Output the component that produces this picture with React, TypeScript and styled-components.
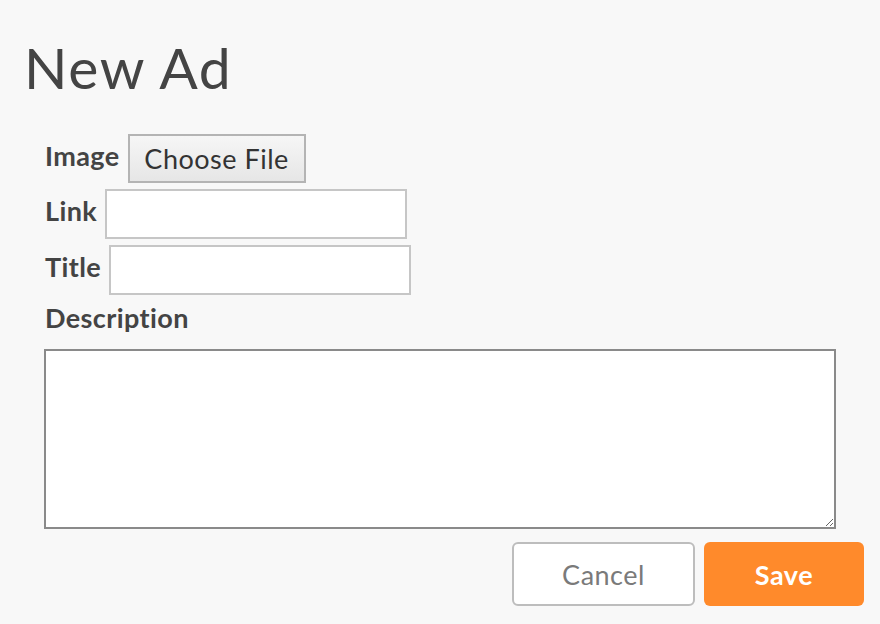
import styled, { createGlobalStyle } from 'styled-components';

const GlobalStyle = createGlobalStyle`
  html, body {
    margin: 0;
    padding: 0;
    background: #f8f8f8;
  }
  body {
    font-family: Lato, "Open Sans", sans-serif;
    color: #444;
  }
`;

const Page = styled.div`
  width: 880px;
  height: 624px;
  box-sizing: border-box;
  padding: 39px 16px 0 24px;
  background: #f8f8f8;
`;

const Heading = styled.h1`
  margin: 0 0 38px 0;
  font-family: Lato, sans-serif;
  font-weight: 400;
  font-size: 57px;
  line-height: 57px;
  letter-spacing: 1.6px;
  color: #444;
`;

const Form = styled.form`
  display: flex;
  flex-direction: column;
  padding-left: 21px;
`;

const Row = styled.div`
  display: flex;
  align-items: center;
  gap: 8px;
  margin-bottom: 6px;
`;

const Label = styled.label`
  font-family: Lato, sans-serif;
  font-weight: 700;
  font-size: 27px;
  line-height: 32px;
  letter-spacing: 0.4px;
  padding-bottom: 6px;
  color: #444;
`;

const FileButton = styled.button`
  width: 178px;
  height: 49px;
  box-sizing: border-box;
  border: 2px solid #b4b4b4;
  border-radius: 0;
  background: linear-gradient(#f6f6f6, #e6e6e6);
  font-family: Lato, sans-serif;
  font-size: 27px;
  letter-spacing: 0.5px;
  color: #333;
  padding: 0;
`;

const TextInput = styled.input<{ $w: number }>`
  width: ${p => p.$w}px;
  height: 50px;
  box-sizing: border-box;
  border: 2px solid #c6c6c6;
  background: #fff;
  outline: none;
`;

const DescLabel = styled(Label)`
  padding: 1px 0 0;
  margin-bottom: 15px;
`;

const TextArea = styled.textarea`
  width: 792px;
  height: 180px;
  margin-left: -1px;
  box-sizing: border-box;
  border: 2px solid #8a8a8a;
  background: #fff;
  outline: none;
  resize: both;
`;

const Actions = styled.div`
  display: flex;
  justify-content: flex-end;
  gap: 9px;
  margin-top: 13px;
`;

const ActionButton = styled.button<{ $primary?: boolean }>`
  height: 64px;
  box-sizing: border-box;
  border-radius: 6px;
  font-family: Lato, sans-serif;
  font-size: 27px;
  letter-spacing: 0.5px;
  padding: 0;
  width: ${p => (p.$primary ? 160 : 183)}px;
  border: ${p => (p.$primary ? 'none' : '2px solid #bdbdbd')};
  background: ${p => (p.$primary ? '#ff8a2b' : '#fff')};
  color: ${p => (p.$primary ? '#fff' : '#7a7a7a')};
  font-weight: ${p => (p.$primary ? 700 : 400)};
`;

export default function App() {
  return (
    <Page>
      <GlobalStyle />
      <Heading>New Ad</Heading>
      <Form onSubmit={e => e.preventDefault()}>
        <Row>
          <Label>Image</Label>
          <FileButton type="button">Choose File</FileButton>
        </Row>
        <Row>
          <Label>Link</Label>
          <TextInput $w={302} type="text" />
        </Row>
        <Row>
          <Label>Title</Label>
          <TextInput $w={302} type="text" />
        </Row>
        <DescLabel>Description</DescLabel>
        <TextArea />
        <Actions>
          <ActionButton type="button">Cancel</ActionButton>
          <ActionButton type="submit" $primary>Save</ActionButton>
        </Actions>
      </Form>
    </Page>
  );
}
